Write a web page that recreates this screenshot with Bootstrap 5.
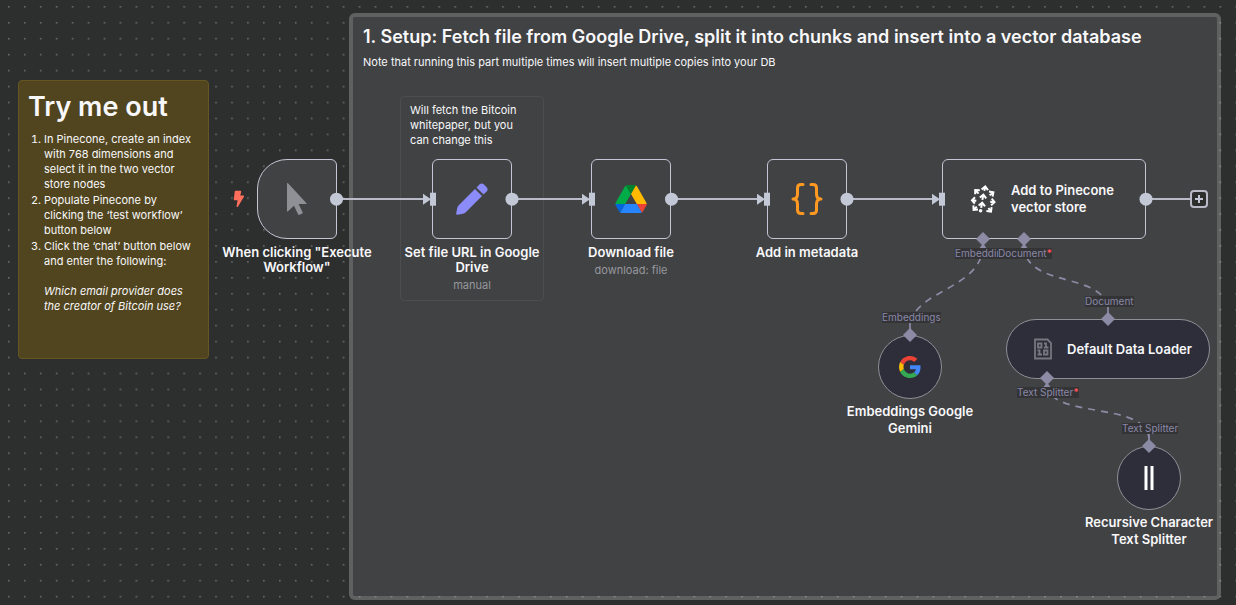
<!DOCTYPE html>
<html lang="en">
<head>
<meta charset="utf-8">
<meta name="viewport" content="width=device-width, initial-scale=1">
<title>Vector store workflow</title>
<link href="https://cdn.jsdelivr.net/npm/bootstrap@5.3.0/dist/css/bootstrap.min.css" rel="stylesheet">
<style>
  body { background: #2d2e2e; color: #f8f8fa; font-family: Inter, "Liberation Sans", sans-serif; }
  .canvas { min-height: 100vh; }
  .layer { inset: 0; pointer-events: none; }
  .note { font-size: 11px; line-height: 15px; border-radius: 4px; }
  .note-try { left: 18px; top: 80px; width: 191px; height: 279px; padding: 10px 9px; background: #51451f; border: 1px solid #655624; }
  .note-try h1 { font-size: 27px; line-height: 32px; font-weight: 600; margin: 0 0 9px; }
  .note-try ol { padding-left: 16px; }
  .note-try li { line-height: 15px; margin-bottom: 1px; }
  .note-setup { left: 349px; top: 13px; right: 15px; height: 587px; padding: 6px 10px; background: #414244; background-clip: padding-box; border: 4px solid rgba(255, 255, 255, .24); border-radius: 6px; }
  .note-setup h2 { font-size: 18px; line-height: 28px; font-weight: 600; margin: 0 0 4px; }
  .note-fetch { left: 400px; top: 96px; width: 144px; height: 205px; padding: 6px 9px; border: 1px solid #4c4d4f; }
  .flow-node { width: 80px; height: 80px; background: #414244; border: 1px solid #c3c6d4; border-radius: 6px; }
  .node-trigger { border-radius: 30px 6px 6px 30px; }
  .node-wide { width: 204px; }
  .node-sub { background: #2d2e3a; border-color: #8f9097; }
  .node-round { width: 64px; height: 64px; border-radius: 50%; }
  .node-pill { width: 204px; height: 60px; border-radius: 30px; }
  .name { font-size: 13px; line-height: 15px; font-weight: 600; }
  .name-loose { line-height: 17px; }
  .caption { width: 150px; left: 50%; margin-left: -75px; top: 100%; padding-top: 7px; text-align: center; }
  .caption.name-loose { padding-top: 5px; }
  .detail { font-size: 11px; line-height: 15px; color: #96989d; padding-top: 3px; }
  .port { font-size: 10px; line-height: 11px; color: #8987a8; background: #343436; white-space: nowrap; }
  .port b { color: #ff4f56; }
  .add { left: 1190px; top: 190px; width: 18px; height: 18px; background: #2d2e2e; border: 2px solid #b9bcc8; border-radius: 4px; }
</style>
</head>
<body>
<main class="canvas position-relative overflow-hidden">
  <svg class="layer position-absolute w-100 h-100" aria-hidden="true">
    <defs><pattern id="dots" width="16" height="16" patternUnits="userSpaceOnUse" patternTransform="translate(8 6) scale(.9963)"><rect width="1.6" height="1.6" fill="#696a6a"/></pattern></defs>
    <rect width="100%" height="100%" fill="url(#dots)"/>
  </svg>

  <section class="note note-try position-absolute">
    <h1>Try me out</h1>
    <ol class="mb-0">
      <li>In Pinecone, create an index with 768 dimensions and select it in the two vector store nodes</li>
      <li>Populate Pinecone by clicking the ‘test workflow’ button below</li>
      <li>Click the ‘chat’ button below and enter the following:<br><br><em>Which email provider does the creator of Bitcoin use?</em></li>
    </ol>
  </section>

  <section class="note note-setup position-absolute">
    <h2>1. Setup: Fetch file from Google Drive, split it into chunks and insert into a vector database</h2>
    <p class="mb-0">Note that running this part multiple times will insert multiple copies into your DB</p>
  </section>

  <section class="note note-fetch position-absolute">Will fetch the Bitcoin whitepaper, but you can change this</section>

  <!-- nodes -->
  <div class="flow-node node-trigger position-absolute d-flex align-items-center justify-content-center" style="left:257px;top:159px">
    <svg width="22" height="34" viewBox="0 0 22 34" aria-hidden="true"><path d="M1 2v27q0 1 1 .2l6-5.400 4 8.400q.5 1 1.500.6l2.500-1.100q1-.5.6-1.500l-4-8.200h7.400q1.200 0 .3-1L2 1.200Q1 .6 1 2Z" fill="#8f9096"/></svg>
    <div class="caption position-absolute name">When clicking "Execute Workflow"</div>
  </div>
  <div class="flow-node position-absolute d-flex align-items-center justify-content-center" style="left:432px;top:159px">
    <svg width="34" height="34" viewBox="0 0 34 34" aria-hidden="true"><g fill="#8b8cfa"><path d="m20 7 7 7L10.500 30.500Q9.500 31.400 8 31.700l-5.500 1Q1 33 1.200 31.500l1-5.500q.3-1.500 1.300-2.500Z"/><path d="m21.500 5.500 3-3q2.200-2 4.400 0l2.700 2.700q2 2.200 0 4.300l-3.100 3.100Z"/></g></svg>
    <div class="caption position-absolute name">Set file URL in Google Drive<div class="detail fw-normal">manual</div></div>
  </div>
  <div class="flow-node position-absolute d-flex align-items-center justify-content-center" style="left:591px;top:159px">
    <svg width="32" height="28" viewBox="0 0 87.300 78" aria-hidden="true"><path d="m6.600 66.850 3.850 6.650c.8 1.400 1.950 2.500 3.300 3.300L27.500 53H0c0 1.550.4 3.100 1.200 4.500z" fill="#0066da"/><path d="M43.650 25 29.900 1.200c-1.350.8-2.500 1.900-3.300 3.300L1.200 48.500A9.060 9.060 0 0 0 0 53h27.500z" fill="#00ac47"/><path d="M73.550 76.800c1.350-.8 2.500-1.900 3.300-3.300l1.600-2.750L86.100 57.500c.8-1.400 1.200-2.950 1.200-4.500H59.800l5.850 11.500z" fill="#ea4335"/><path d="M43.650 25 57.400 1.200C56.050.4 54.500 0 52.900 0H34.400c-1.600 0-3.150.45-4.500 1.200z" fill="#00832d"/><path d="M59.800 53H27.500L13.750 76.800c1.350.8 2.900 1.200 4.500 1.200h50.800c1.600 0 3.150-.45 4.500-1.200z" fill="#2684fc"/><path d="m73.400 26.500-12.700-22c-.8-1.400-1.950-2.500-3.300-3.300L43.650 25 59.800 53h27.450c0-1.550-.4-3.100-1.200-4.500z" fill="#ffba00"/></svg>
    <div class="caption position-absolute name">Download file<div class="detail fw-normal">download: file</div></div>
  </div>
  <div class="flow-node position-absolute d-flex align-items-center justify-content-center" style="left:767px;top:159px">
    <svg width="32" height="34" viewBox="0 0 32 34" fill="none" stroke="#ff9922" stroke-width="3" stroke-linecap="round" stroke-linejoin="round" aria-hidden="true"><path d="M12 2.500H10Q6.500 2.500 6.500 6v6Q6.500 17 2 17q4.500 0 4.500 5v6q0 3.500 3.500 3.500h2M20 2.500h2q3.500 0 3.500 3.500v6q0 5 4.500 5-4.500 0-4.500 5v6q0 3.500-3.500 3.500h-2"/></svg>
    <div class="caption position-absolute name">Add in metadata</div>
  </div>
  <div class="flow-node node-wide position-absolute d-flex align-items-center" style="left:942px;top:159px">
    <svg class="ms-4 flex-shrink-0" width="32" height="32" viewBox="0 0 32 32" fill="none" stroke="#fff" stroke-width="2" aria-hidden="true">
      <path d="m14.600 6.400 3.600-3 2.800 3.800M18.100 3.800l-.7 4M8.200 11.200V7.100l4.600.2M8.600 7.600l3 3M22 8.600l4.400.8-.8 4.200M26 9.700l-3.400 2.500M8 14.200l-3 3 2.800 3.400M5.300 17.200l4 .5M24.700 15.600l2.800 3.600-3.400 3M27.200 19.200l-4-.5M6.400 22.400l.2 4.400 4.400-.4M7 26.400l2.800-2.800M24.600 24.200l-.6 4.400-4.600-.6M23.700 28.200l-2.300-3.200M12.800 14.600l3.600-3 2.800 3.800M16.200 12l-.8 4.800M11.700 22.600l3.500-3 2.800 3.800M15 20l-.8 4.800"/><circle cx="13.600" cy="27.800" r=".8"/>
    </svg>
    <div class="name name-loose ms-2 ps-1">Add to Pinecone<br>vector store</div>
  </div>
  <div class="flow-node node-sub node-round position-absolute d-flex align-items-center justify-content-center" style="left:878px;top:335px">
    <svg width="22" height="22" viewBox="0 0 48 48" aria-hidden="true"><path fill="#ea4335" d="M24 9.500c3.540 0 6.710 1.220 9.210 3.600l6.850-6.850C35.900 2.380 30.470 0 24 0 14.620 0 6.510 5.380 2.560 13.220l7.980 6.190C12.430 13.720 17.740 9.500 24 9.500z"/><path fill="#4285f4" d="M46.980 24.550c0-1.570-.15-3.090-.38-4.550H24v9.020h12.940c-.58 2.960-2.260 5.480-4.780 7.180l7.730 6c4.510-4.180 7.090-10.360 7.090-17.650z"/><path fill="#fbbc05" d="M10.530 28.590A14.500 14.500 0 0 1 9.770 24c0-1.600.27-3.140.76-4.590l-7.980-6.190A23.900 23.900 0 0 0 0 24c0 3.880.92 7.540 2.560 10.780z"/><path fill="#34a853" d="M24 48c6.480 0 11.930-2.130 15.890-5.810l-7.730-6c-2.150 1.450-4.920 2.300-8.160 2.300-6.260 0-11.570-4.220-13.470-9.910l-7.980 6.190C6.510 42.620 14.620 48 24 48z"/></svg>
    <div class="caption position-absolute name name-loose">Embeddings Google Gemini</div>
  </div>
  <div class="flow-node node-sub node-pill position-absolute d-flex align-items-center" style="left:1006px;top:319px">
    <svg class="ms-4 flex-shrink-0" width="24" height="22" viewBox="-2 0 24 22" fill="none" stroke="#77777f" stroke-width="1.800" aria-hidden="true"><path d="M2 1.500h12.500L18 5v15.500H2Z"/><path d="M5 5.500h3.500v4H5Zm6 0h2v4m-2 0h4.500M4.500 12.500h2v4m-2 0H9M11 12.500h3.500v4H11Z"/></svg>
    <div class="name ms-2 ps-1">Default Data Loader</div>
  </div>
  <div class="flow-node node-sub node-round position-absolute d-flex align-items-center justify-content-center" style="left:1117px;top:446px">
    <svg width="12" height="26" viewBox="0 0 12 26" stroke="#fff" stroke-width="3" aria-hidden="true"><path d="M3 1v24M9 1v24"/></svg>
    <div class="caption position-absolute name name-loose">Recursive Character Text Splitter</div>
  </div>

  <!-- connections and handles -->
  <svg class="layer position-absolute w-100 h-100" aria-hidden="true">
    <defs>
      <g id="inlet"><path d="M-9-5.500v11L-1 0Z"/><path d="M-2-6.500h6v13h-6Z"/></g>
      <path id="gem" d="M0-7 7 0 0 7-7 0Z"/>
    </defs>
    <path d="M337 199h90M512 199h75M671 199h92M847 199h90M1146 199h44" stroke="#b9bcc8" stroke-width="2"/>
    <g fill="#c3c8d6">
      <circle cx="336.500" cy="199.200" r="6.500"/><circle cx="512" cy="199.200" r="6.500"/><circle cx="671.500" cy="199.200" r="6.500"/><circle cx="847" cy="199.200" r="6.500"/><circle cx="1146" cy="199.200" r="6.500"/>
      <use href="#inlet" x="432" y="199.200"/><use href="#inlet" x="591" y="199.200"/><use href="#inlet" x="766" y="199.200"/><use href="#inlet" x="941" y="199.200"/>
    </g>
    <g fill="none" stroke="#8c8ba5" stroke-width="1.700" stroke-dasharray="7 6">
      <path d="M983 245C983 290 910 290 910 328"/><path d="M1024 245C1024 290 1108 270 1108 312"/><path d="M1047 384C1047 420 1149 400 1149 440"/>
    </g>
    <path d="M910 323v8M1108 307v8M1149 434v8" stroke="#8c8ba5" stroke-width="1.700"/>
    <g fill="#8c8ba5">
      <use href="#gem" x="983" y="239"/><use href="#gem" x="1024" y="239"/><use href="#gem" x="910" y="335"/><use href="#gem" x="1108" y="319"/><use href="#gem" x="1047" y="378"/><use href="#gem" x="1149" y="446"/>
      <path d="m983 243 4 6h-8ZM1024 243l4 6h-8ZM1047 382l4 6h-8Z"/>
    </g>
    <path d="M235.500 191.500h5l-1.200 4.800h4l-6 10 1.200-6.800h-4Z" fill="#ff6f5c" stroke="#ff6f5c" stroke-width="1.500" stroke-linejoin="round"/>
  </svg>

  <div class="port position-absolute" style="left:955px;top:248px">Embeddings</div>
  <div class="port position-absolute" style="left:998px;top:248px">Document<b>*</b></div>
  <div class="port position-absolute" style="left:882px;top:312px">Embeddings</div>
  <div class="port position-absolute" style="left:1085px;top:296px">Document</div>
  <div class="port position-absolute" style="left:1017px;top:387px">Text Splitter<b>*</b></div>
  <div class="port position-absolute" style="left:1122px;top:423px">Text Splitter</div>

  <button type="button" class="add position-absolute p-0 d-flex align-items-center justify-content-center" aria-label="Add node">
    <svg width="10" height="10" viewBox="0 0 10 10" stroke="#c3c6d4" stroke-width="2" aria-hidden="true"><path d="M5 1v8M1 5h8"/></svg>
  </button>
</main>
<script src="https://cdn.jsdelivr.net/npm/bootstrap@5.3.0/dist/js/bootstrap.bundle.min.js"></script>
</body>
</html>
